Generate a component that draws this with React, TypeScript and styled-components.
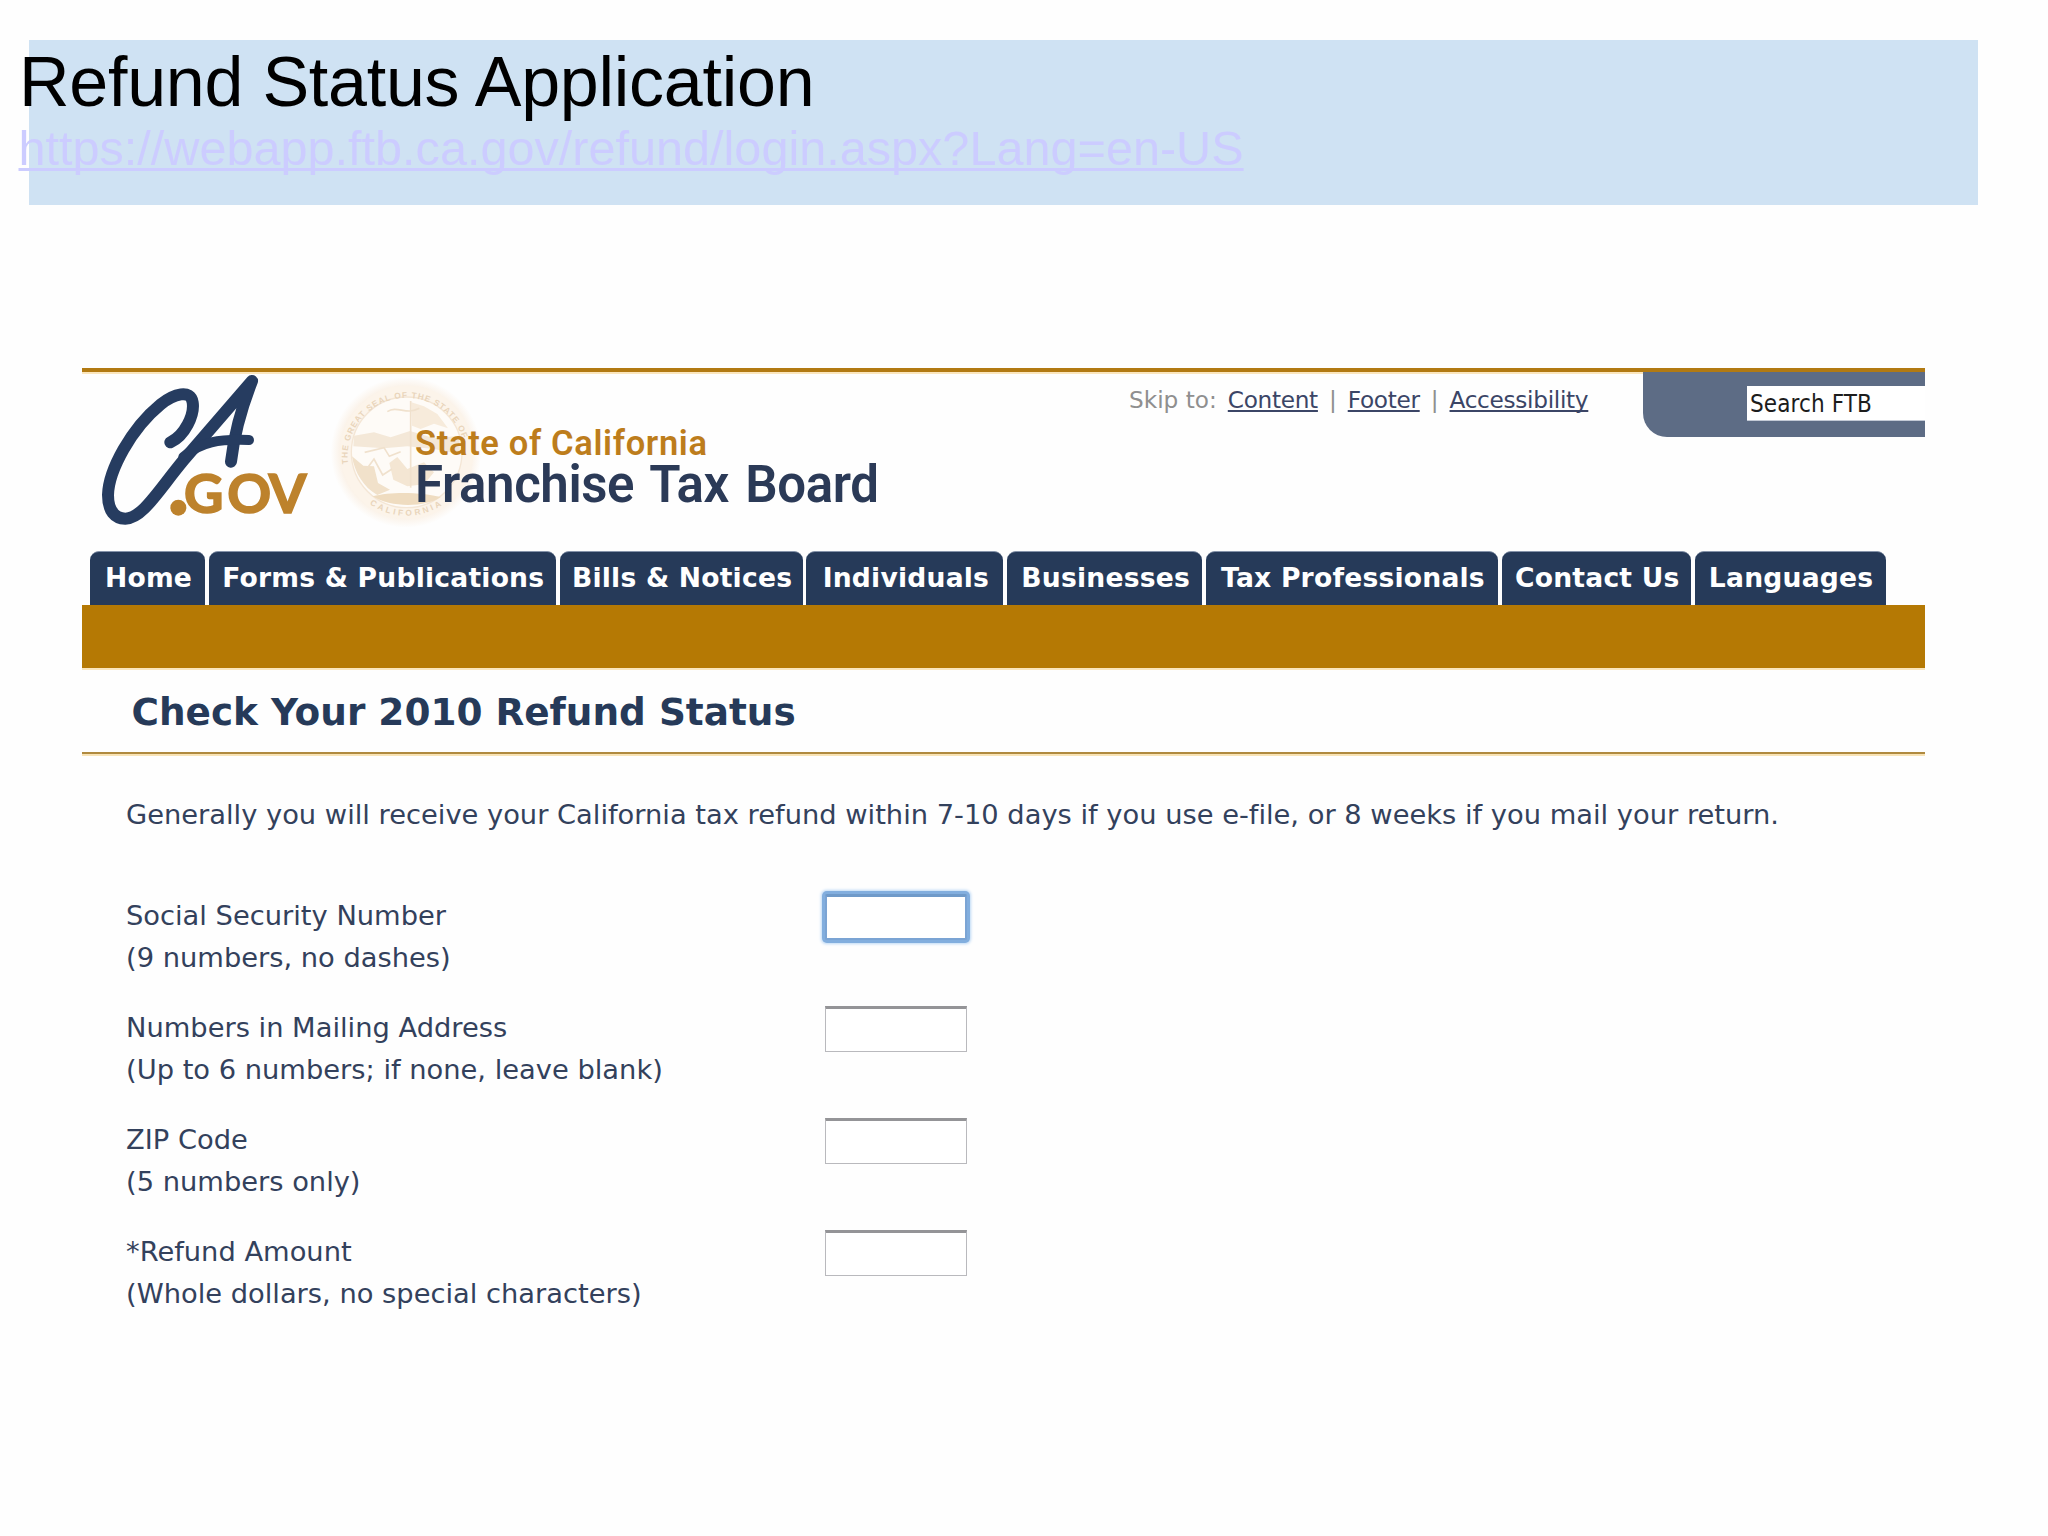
import * as React from 'react';
import styled, { createGlobalStyle, css } from 'styled-components';

interface NavItem {
  title: string;
  width: number;
}

interface Field {
  id: string;
  title: string;
  hint: string;
  active?: boolean;
}

const navItems: NavItem[] = [
  { title: 'Home', width: 115 },
  { title: 'Forms & Publications', width: 347 },
  { title: 'Bills & Notices', width: 243 },
  { title: 'Individuals', width: 197 },
  { title: 'Businesses', width: 195 },
  { title: 'Tax Professionals', width: 292 },
  { title: 'Contact Us', width: 189 },
  { title: 'Languages', width: 191 },
];

const fields: Field[] = [
  { id: 'ssn', title: 'Social Security Number', hint: '(9 numbers, no dashes)', active: true },
  { id: 'address', title: 'Numbers in Mailing Address', hint: '(Up to 6 numbers; if none, leave blank)' },
  { id: 'zip', title: 'ZIP Code', hint: '(5 numbers only)' },
  { id: 'amount', title: '*Refund Amount', hint: '(Whole dollars, no special characters)' },
];

const GlobalStyle = createGlobalStyle`
  * {
    box-sizing: border-box;
  }

  body {
    margin: 0;
    background-color: #ffffff;
  }
`;

const Slide = styled.div`
  width: 2048px;
  height: 1536px;
  padding-top: 40px;
  overflow: hidden;
  background-color: #fefefe;
`;

const Banner = styled.header`
  width: 1949px;
  height: 165px;
  margin-left: 29px;
  padding-top: 3px;
  background-color: #cfe2f3;
  font-family: 'Liberation Sans', Arial, sans-serif;
  white-space: nowrap;
`;

const BannerTitle = styled.h1`
  margin: 0 0 0 -10px;
  font-size: 70px;
  font-weight: 400;
  line-height: 78px;
  letter-spacing: -0.25px;
  color: #000000;
`;

const BannerLink = styled.a`
  display: block;
  margin-left: -10.5px;
  font-size: 48.6px;
  line-height: 54px;
  color: #ccccff;
  text-decoration: underline;
  text-decoration-thickness: 3px;
  text-underline-offset: 3px;
  text-decoration-skip-ink: none;
`;

const Site = styled.main`
  width: 1843px;
  margin: 163px 0 0 82px;
  border-top: 4px solid #b27a12;
  font-family: 'DejaVu Sans', Verdana, sans-serif;
  font-variant-ligatures: none;
  color: #33415c;
  white-space: nowrap;
`;

const SiteHeader = styled.div`
  display: flex;
  align-items: flex-start;
  height: 179px;
  padding-left: 13px;
  box-shadow: inset 0 2px 0 #fbe6bd;
`;

const LogoImage = styled.svg`
  flex: none;
  width: 220px;
  height: 170px;
  margin: -7px 1px 0 -1px;
`;

const SealImage = styled.svg`
  flex: none;
  width: 170px;
  height: 170px;
  margin: -3px 0 0 9px;
`;

const Agency = styled.div`
  position: relative;
  flex: 1;
  margin-left: -79px;
  padding-top: 53px;
  font-family: Roboto, sans-serif;
`;

const AgencyState = styled.div`
  font-size: 34.5px;
  font-weight: 600;
  line-height: 36px;
  letter-spacing: 0.65px;
  color: #bd7d1c;
`;

const AgencyName = styled.div`
  font-size: 51px;
  font-weight: 600;
  line-height: 48px;
  letter-spacing: -0.4px;
  word-spacing: 4px;
  color: #2b3a57;
`;

const SkipLinks = styled.div`
  display: flex;
  flex: none;
  width: 514px;
  padding-top: 13px;
  gap: 11px;
  font-size: 23.2px;
  line-height: 30px;
  color: #8f8f8f;
`;

const SkipLink = styled.a`
  color: #3b4566;
  letter-spacing: -0.3px;
  text-decoration: underline;
  text-decoration-thickness: 2px;
  text-underline-offset: 2px;
  text-decoration-skip-ink: none;
`;

const Search = styled.div`
  display: flex;
  justify-content: flex-end;
  flex: none;
  width: 282px;
  height: 65px;
  padding-top: 14px;
  background-color: #5d6c85;
  border-bottom-left-radius: 24px;
`;

const SearchField = styled.div`
  width: 178px;
  height: 35px;
  padding-left: 3px;
  border-bottom: 1px solid #c3cad6;
  background-color: #ffffff;
  font-family: 'DejaVu Sans Condensed', 'DejaVu Sans', sans-serif;
  font-size: 24px;
  line-height: 36px;
  letter-spacing: 0.1px;
  color: #1c1c1c;
`;

const Nav = styled.nav`
  display: flex;
  gap: 3.8px;
  height: 54px;
  padding-left: 8px;
`;

const NavTab = styled.a<{ $width: number }>`
  width: ${({ $width }) => $width}px;
  padding-left: 2px;
  border-top: 1px solid #8593aa;
  border-radius: 9px 9px 0 0;
  background-color: #263a59;
  font-size: 26.6px;
  font-weight: 700;
  line-height: 52px;
  letter-spacing: 0.2px;
  text-align: center;
  color: #ffffff;
`;

const SubNav = styled.div`
  height: 65px;
  border-bottom: 2px solid #fbe6bd;
  background-color: #b57904;
`;

const PageTitle = styled.h2`
  height: 84px;
  margin: 0 0 2px;
  padding: 2px 0 0 49.5px;
  border-bottom: 2px solid #b08a3f;
  box-shadow: 0 2px 0 #f8e3b6;
  font-size: 37.4px;
  font-weight: 700;
  line-height: 80px;
  color: #263a59;
`;

const Content = styled.div`
  padding: 38px 0 0 44px;
  font-size: 27.3px;
  line-height: 42px;
`;

const Intro = styled.p`
  margin: 0 0 59px;
`;

const Form = styled.form`
  display: grid;
  gap: 28px;
`;

const FormRow = styled.div`
  display: grid;
  grid-template-columns: 699px 142px;
  align-items: start;
  height: 84px;
`;

const Label = styled.label`
  display: flex;
  flex-direction: column;
`;

const Input = styled.input<{ $active?: boolean }>`
  width: 142px;
  height: 46px;
  margin-top: -1px;
  border: 1px solid #b9b9bd;
  border-top: 3px solid #949497;
  border-radius: 0;
  outline: none;
  background-color: #ffffff;

  ${({ $active }) => $active && css`
    border: 2px solid #7ba4d4;
    border-top: 3px solid #6f9ac9;
    border-radius: 2px;
    box-shadow: 0 0 0 3px #82aede, 0 0 3px 4px #bcd8f5;
  `}
`;

const Logo = () => (
  <LogoImage viewBox='0 0 660 510'>
    <g fill='none' stroke='#263c60' strokeLinecap='round' strokeLinejoin='round'>
      <path
        strokeWidth='36'
        d='M229 232 C272 212 302 150 296 112 C290 72 240 86 200 118 C112 190 44 315 42 390 C42 438 62 460 94 461 C146 460 194 375 270 284 L474 48 C446 120 420 210 411 290'
      />
      <path strokeWidth='30' d='M268 276 C320 230 375 222 465 225' />
    </g>
    <text
      x='270 400 524'
      y='444'
      fill='#bd822c'
      stroke='#bd822c'
      strokeWidth='5'
      fontFamily='Lato, sans-serif'
      fontSize='163'
      fontWeight='700'
    >
      GOV
    </text>
    <circle cx='253' cy='428' r='24' fill='#bd822c' />
  </LogoImage>
);

const Seal = () => (
  <SealImage viewBox='0 0 510 510'>
    <defs>
      <radialGradient id='sealGlow'>
        <stop offset='0.8' stopColor='#f9ecdd' />
        <stop offset='1' stopColor='#fefefe' />
      </radialGradient>
      <path id='sealTop' d='M72 285 A177 177 0 1 1 424 280' />
      <path id='sealBottom' d='M130 400 A193 193 0 0 0 366 400' />
    </defs>
    <circle cx='246' cy='250' r='226' fill='url(#sealGlow)' />
    <circle cx='248' cy='250' r='200' fill='#fcf4ea' />
    <circle cx='248' cy='250' r='166' fill='#fefbf7' stroke='#f4e6d5' strokeWidth='4' />
    <path fill='#f4e8d8' d='M90 200 L150 190 L200 205 L258 186 L330 208 L406 200 L408 255 L330 240 L250 232 L180 238 L88 232 Z' />
    <path fill='#f7ebdb' d='M262 100 L300 112 L340 135 L372 178 L330 164 L290 180 L264 170 Z' />
    <path fill='#f1e1ca' d='M84 262 L118 290 L150 292 L162 342 L198 362 L160 378 C120 356 92 312 84 262 Z' />
    <path fill='#f4e6d3' d='M196 282 L220 264 L250 300 L300 280 L330 310 L300 346 L250 352 L208 332 Z' />
    <path fill='#efdcc0' d='M146 382 C200 366 300 370 350 384 C310 414 200 418 146 382 Z' />
    <g fill='none' stroke='#f0e1cd' strokeWidth='5'>
      <path d='M260 96 V356' />
      <path d='M190 128 C220 108 246 140 286 118' />
      <path d='M122 250 L180 236 L196 262 L230 248' />
      <path d='M128 300 L150 270 L176 318 L204 300' />
    </g>
    <g fill='#e9d5bb' fontFamily='Liberation Sans, sans-serif' fontSize='25' fontWeight='700'>
      <text>
        <textPath href='#sealTop' textLength='520'>THE GREAT SEAL OF THE STATE OF</textPath>
      </text>
      <text>
        <textPath href='#sealBottom' startOffset='8' textLength='230'>CALIFORNIA</textPath>
      </text>
    </g>
  </SealImage>
);

export default function App() {
  return (
    <>
      <GlobalStyle />
      <Slide>
        <Banner>
          <BannerTitle>Refund Status Application</BannerTitle>
          <BannerLink>https://webapp.ftb.ca.gov/refund/login.aspx?Lang=en-US</BannerLink>
        </Banner>
        <Site>
          <SiteHeader>
            <Logo />
            <Seal />
            <Agency>
              <AgencyState>State of California</AgencyState>
              <AgencyName>Franchise Tax Board</AgencyName>
            </Agency>
            <SkipLinks>
              <span>Skip to:</span>
              <SkipLink>Content</SkipLink>
              <span>|</span>
              <SkipLink>Footer</SkipLink>
              <span>|</span>
              <SkipLink>Accessibility</SkipLink>
            </SkipLinks>
            <Search>
              <SearchField>Search FTB</SearchField>
            </Search>
          </SiteHeader>
          <Nav>
            {navItems.map(item => (
              <NavTab key={item.title} $width={item.width}>{item.title}</NavTab>
            ))}
          </Nav>
          <SubNav />
          <PageTitle>Check Your 2010 Refund Status</PageTitle>
          <Content>
            <Intro>
              Generally you will receive your California tax refund within 7-10 days if you use e-file, or 8 weeks if you mail your return.
            </Intro>
            <Form>
              {fields.map(({ id, title, hint, active }) => (
                <FormRow key={id}>
                  <Label htmlFor={id}>
                    <span>{title}</span>
                    <span>{hint}</span>
                  </Label>
                  <Input id={id} type='text' $active={active} />
                </FormRow>
              ))}
            </Form>
          </Content>
        </Site>
      </Slide>
    </>
  );
}
